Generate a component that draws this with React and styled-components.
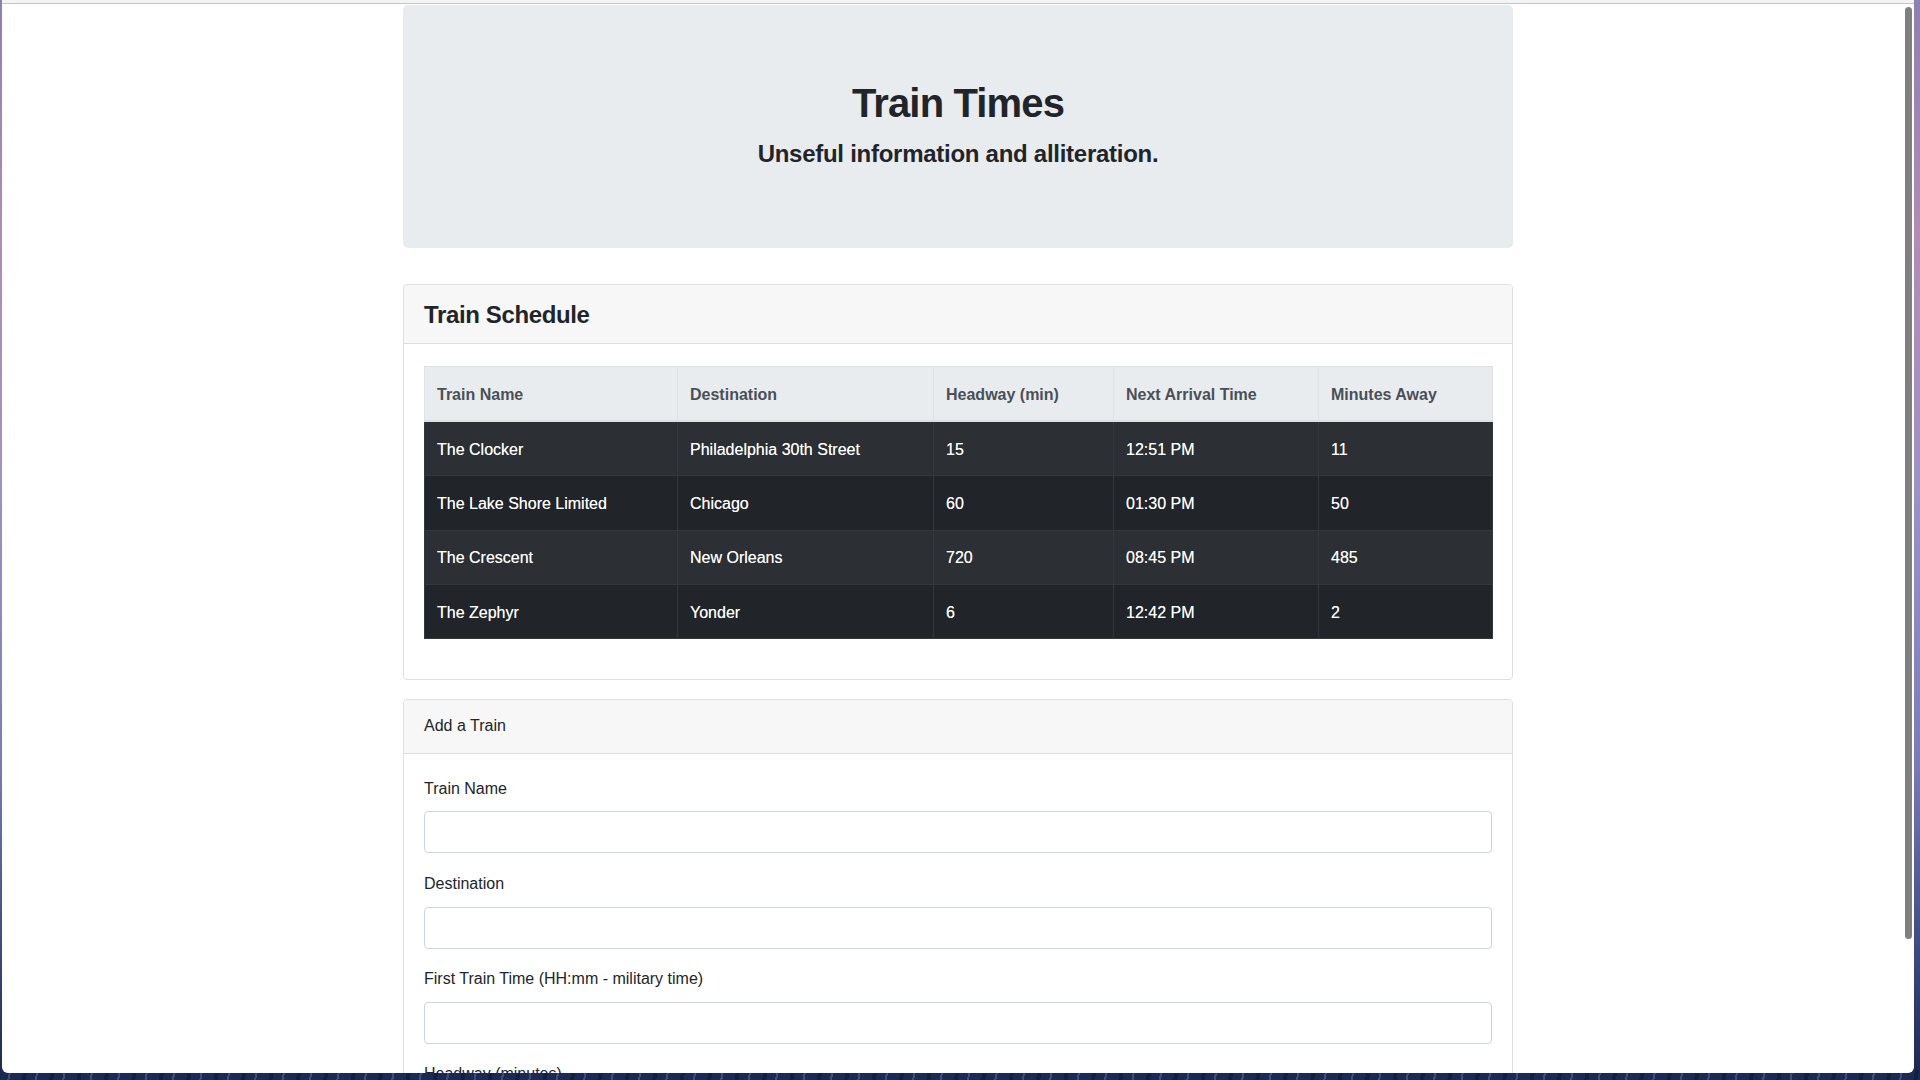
import React from "react";
import styled, { createGlobalStyle } from "styled-components";

const GlobalStyle = createGlobalStyle`
  html, body { margin: 0; padding: 0; overflow: hidden; }
  body {
    font-family: "Liberation Sans", Arial, Helvetica, sans-serif;
    color: #212529;
    font-size: 16px;
  }
  *, *::before, *::after { box-sizing: border-box; }
`;

const Desktop = styled.div`
  width: 1920px;
  height: 1080px;
  display: flex;
  padding: 0 6px 7px 2px;
  background:
    repeating-linear-gradient(100deg, rgba(255,255,255,0) 0 9px, rgba(120,140,200,0.35) 9px 11px, rgba(0,0,0,0) 11px 23px, rgba(10,20,50,0.5) 23px 27px) left bottom / 100% 10px no-repeat,
    linear-gradient(180deg, #8c80b4 0%, #b28cb4 22%, #9d92c9 45%, #7b7cbc 70%, #3b4b82 88%, #1c2a52 99%);
`;

const Window = styled.div`
  position: relative;
  flex: 1;
  display: flex;
  flex-direction: column;
  background: #fff;
  border-radius: 0 0 6px 6px;
  overflow: hidden;
`;

const ChromeEdge = styled.div`
  flex: none;
  height: 4px;
  background: #f4f4f4;
  border-bottom: 1px solid #c6c6c6;
`;

const Page = styled.main`
  flex: 1;
  overflow: hidden;
`;

const Container = styled.div`
  width: 1110px;
  margin: 0 auto;
`;

const Jumbotron = styled.header`
  margin-top: 1px;
  background: #e9ecef;
  border-radius: 5px;
  padding: 72px 32px 78px;
  text-align: center;
`;

const Title = styled.h1`
  margin: 0 0 8px;
  font-size: 40px;
  line-height: 53px;
  font-weight: 700;
  letter-spacing: -0.85px;
  color: #212529;
`;

const Subtitle = styled.h2`
  margin: 0;
  font-size: 24px;
  line-height: 32px;
  font-weight: 700;
  letter-spacing: -0.27px;
  color: #212529;
`;

const Card = styled.section`
  margin-top: ${(p) => p.$gap}px;
  border: 1px solid #dfdfdf;
  border-radius: 4px;
  background: #fff;
  overflow: hidden;
`;

const CardHeader = styled.div`
  background: #f7f7f7;
  border-bottom: 1px solid #dfdfdf;
  padding: ${(p) => (p.$large ? "14px 20px 12px" : "13.5px 20px")};
`;

const CardTitle = styled.h4`
  margin: 0;
  font-size: 24px;
  line-height: 32px;
  font-weight: 700;
  letter-spacing: -0.37px;
`;

const HeaderText = styled.div`
  font-size: 16px;
  line-height: 26px;
`;

const CardBody = styled.div`
  padding: 22px 20px ${(p) => p.$bottom}px;
`;

const Table = styled.table`
  width: 1068px;
  border-collapse: collapse;
  table-layout: fixed;
  margin-bottom: 18px;
`;

const Th = styled.th`
  text-align: left;
  font-weight: 700;
  color: #495057;
  background: #e9ecef;
  border: 1px solid #dee2e6;
  border-bottom: 2px solid #dee2e6;
  padding: 14.8px 12px 11.8px;
  line-height: 26.6px;
  font-size: 16px;
`;

const Row = styled.tr`
  background: ${(p) => (p.$odd ? "#2c3034" : "#212529")};
`;

const Td = styled.td`
  color: #fff;
  border: 1px solid #32383e;
  padding: 14.8px 12px 11.8px;
  line-height: 26.6px;
  font-size: 16px;
  white-space: nowrap;
  text-shadow: 0 0 0.6px rgba(255, 255, 255, 0.7);
`;

const FormGroup = styled.div`
  margin-bottom: 17.7px;
`;

const Label = styled.label`
  display: block;
  font-size: 16px;
  line-height: 26.6px;
  margin-bottom: 8.9px;
  color: #212529;
`;

const Input = styled.input`
  display: block;
  width: 100%;
  height: 42px;
  padding: 6px 12px;
  font-size: 16px;
  font-family: inherit;
  color: #495057;
  background: #fff;
  border: 1px solid #ced4da;
  border-radius: 4px;
  outline: none;
`;

const ScrollThumb = styled.div`
  position: absolute;
  top: 7px;
  right: 2px;
  width: 7px;
  height: 932px;
  border-radius: 4px;
  background: #7f7f7f;
`;

const columns = [
  { label: "Train Name", width: 253 },
  { label: "Destination", width: 256 },
  { label: "Headway (min)", width: 180 },
  { label: "Next Arrival Time", width: 205 },
  { label: "Minutes Away", width: 174 },
];

const trains = [
  ["The Clocker", "Philadelphia 30th Street", "15", "12:51 PM", "11"],
  ["The Lake Shore Limited", "Chicago", "60", "01:30 PM", "50"],
  ["The Crescent", "New Orleans", "720", "08:45 PM", "485"],
  ["The Zephyr", "Yonder", "6", "12:42 PM", "2"],
];

const fields = [
  "Train Name",
  "Destination",
  "First Train Time (HH:mm - military time)",
  "Headway (minutes)",
];

export default function App() {
  return (
    <>
      <GlobalStyle />
      <Desktop>
        <Window>
          <ChromeEdge />
          <Page>
            <Container>
              <Jumbotron>
                <Title>Train Times</Title>
                <Subtitle>Unseful information and alliteration.</Subtitle>
              </Jumbotron>

              <Card $gap={36}>
                <CardHeader $large>
                  <CardTitle>Train Schedule</CardTitle>
                </CardHeader>
                <CardBody $bottom={22}>
                  <Table>
                    <colgroup>
                      {columns.map((c) => (
                        <col key={c.label} style={{ width: c.width }} />
                      ))}
                    </colgroup>
                    <thead>
                      <tr>
                        {columns.map((c) => (
                          <Th key={c.label}>{c.label}</Th>
                        ))}
                      </tr>
                    </thead>
                    <tbody>
                      {trains.map((t, i) => (
                        <Row key={t[0]} $odd={i % 2 === 0}>
                          {t.map((v, j) => (
                            <Td key={j}>{v}</Td>
                          ))}
                        </Row>
                      ))}
                    </tbody>
                  </Table>
                </CardBody>
              </Card>

              <Card $gap={19}>
                <CardHeader>
                  <HeaderText>Add a Train</HeaderText>
                </CardHeader>
                <CardBody $bottom={22}>
                  {fields.map((f) => (
                    <FormGroup key={f}>
                      <Label>{f}</Label>
                      <Input type="text" />
                    </FormGroup>
                  ))}
                </CardBody>
              </Card>
            </Container>
          </Page>
          <ScrollThumb />
        </Window>
      </Desktop>
    </>
  );
}
